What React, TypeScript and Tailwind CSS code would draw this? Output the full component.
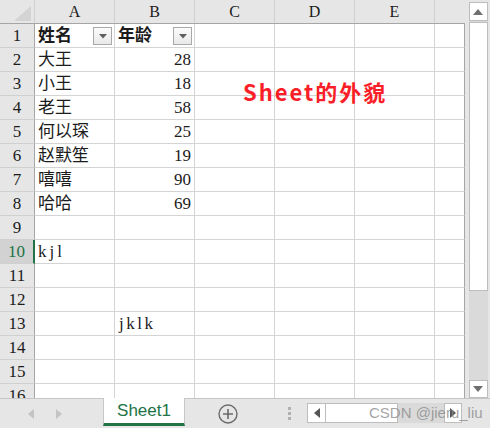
import React from "react";

type Row = { a?: string; b?: string; aBold?: boolean; filter?: boolean };

const rows: Row[] = [
  { a: "姓名", b: "年龄", aBold: true, filter: true },
  { a: "大王", b: "28" },
  { a: "小王", b: "18" },
  { a: "老王", b: "58" },
  { a: "何以琛", b: "25" },
  { a: "赵默笙", b: "19" },
  { a: "嘻嘻", b: "90" },
  { a: "哈哈", b: "69" },
  {},
  { a: "kjl" },
  {},
  {},
  { b: "jklk" },
  {},
  {},
  {},
];

const cols = ["A", "B", "C", "D", "E"];

function FilterButton() {
  return (
    <div className="absolute right-[2px] top-[3px] w-[19px] h-[18px] border border-[#a9a9a9] bg-gradient-to-b from-[#fbfbfb] to-[#e9e9e9] flex items-center justify-center">
      <svg width="8" height="5" viewBox="0 0 8 5">
        <path d="M0 0 L8 0 L4 4.5 Z" fill="#5f5f5f" />
      </svg>
    </div>
  );
}

function Triangle({ dir, color }: { dir: "up" | "down" | "left" | "right"; color: string }) {
  const d = {
    up: "M0 6 L10 6 L5 0 Z",
    down: "M0 0 L10 0 L5 6 Z",
    left: "M6 0 L6 10 L0 5 Z",
    right: "M0 0 L0 10 L6 5 Z",
  }[dir];
  const vertical = dir === "up" || dir === "down";
  return (
    <svg width={vertical ? 10 : 6} height={vertical ? 6 : 10} viewBox={vertical ? "0 0 10 6" : "0 0 6 10"}>
      <path d={d} fill={color} />
    </svg>
  );
}

const serif = "[font-family:'Liberation_Serif','Noto_Sans_CJK_SC',serif]";

// latin text in the cells is wider than Liberation Serif, loosen it a bit
const isLatin = (s?: string) => !!s && /^[a-z]+$/.test(s);

export default function App() {
  return (
    <div className="w-[490px] h-[428px] bg-[#e6e6e6] flex flex-col overflow-hidden select-none">
      <div className="flex h-[398px]">
        {/* sheet grid */}
        <div className={`relative w-[465px] h-[398px] overflow-hidden text-[17px] text-[#1b1b1b] ${serif}`}>
          {/* column header */}
          <div className="flex h-[24px] border-b border-[#a6a6a6]">
            <div className="w-[35px] border-r border-[#d0d0d0] flex items-end justify-end pr-[3px] pb-[2px]">
              <svg width="17" height="15" viewBox="0 0 17 15">
                <path d="M17 0 L17 15 L0 15 Z" fill="#d3d3d3" />
              </svg>
            </div>
            {cols.map((c) => (
              <div key={c} className="w-[80px] border-r border-[#d0d0d0] flex items-center justify-center text-[16px]">
                {c}
              </div>
            ))}
            <div className="w-[30px]" />
          </div>

          {/* body */}
          {rows.map((r, i) => {
            const selected = i === 9;
            return (
              <div key={i} className="flex h-[24px]">
                <div
                  className={`w-[35px] border-b border-[#d0d0d0] flex items-center justify-center ${
                    selected
                      ? "bg-[#d2d2d2] text-[#217346] border-r-2 border-r-[#217346]"
                      : "border-r border-r-[#a6a6a6]"
                  }`}
                >
                  {i + 1}
                </div>
                <div
                  className={`relative w-[80px] bg-white border-r border-b border-[#d4d4d4] flex items-center pl-[3px] ${
                    r.aBold ? "font-bold" : ""
                  } ${isLatin(r.a) ? "tracking-[3px]" : ""}`}
                >
                  {r.a}
                  {r.filter && <FilterButton />}
                </div>
                <div
                  className={`relative w-[80px] bg-white border-r border-b border-[#d4d4d4] flex items-center ${
                    r.filter ? "pl-[3px] font-bold" : r.b && /^\d+$/.test(r.b) ? "justify-end pr-[3px]" : "pl-[4px]"
                  } ${isLatin(r.b) ? "tracking-[2.5px]" : ""}`}
                >
                  {r.b}
                  {r.filter && <FilterButton />}
                </div>
                <div className="w-[80px] bg-white border-r border-b border-[#d4d4d4]" />
                <div className="w-[80px] bg-white border-r border-b border-[#d4d4d4]" />
                <div className="w-[80px] bg-white border-r border-b border-[#d4d4d4]" />
                <div className="w-[30px] bg-white border-b border-[#d4d4d4] border-r border-r-[#a6a6a6]" />
              </div>
            );
          })}

          {/* floating text box */}
          <div className="absolute left-[243px] top-[80px] text-[22px] leading-none font-bold tracking-[2px] text-[#fa1e28] [font-family:'Noto_Sans_CJK_SC',sans-serif]">
            Sheet的外貌
          </div>
        </div>

        {/* vertical scrollbar */}
        <div className="w-[25px] flex flex-col items-center pt-[2px] pl-[1px]">
          <div className="w-[19px] h-[19px] bg-white border border-[#bdbdbd] flex items-center justify-center">
            <Triangle dir="up" color="#6f6f6f" />
          </div>
          <div className="w-[19px] flex-1 bg-[#dadada] flex flex-col">
            <div className="h-[269px] bg-white border border-[#bdbdbd] mt-[1px]" />
          </div>
          <div className="w-[19px] h-[18px] bg-white border border-[#bdbdbd] flex items-center justify-center">
            <Triangle dir="down" color="#6f6f6f" />
          </div>
        </div>
      </div>

      {/* sheet tabs bar */}
      <div className="relative h-[30px] border-t border-[#c6c6c6] flex items-start">
        <div className="w-[103px] h-full flex items-center gap-[22px] pl-[28px]">
          <Triangle dir="left" color="#c4c4c4" />
          <Triangle dir="right" color="#c4c4c4" />
        </div>
        <div className="-mt-px w-[82px] h-[28px] bg-white border-x border-[#c6c6c6] border-b-[3px] border-b-[#217346] flex items-center justify-center text-[17px] text-[#217346] [font-family:'Liberation_Sans',sans-serif]">
          Sheet1
        </div>
        <div className="w-[86px] h-full flex items-center justify-center">
          <svg width="20" height="20" viewBox="0 0 20 20">
            <circle cx="10" cy="10" r="9" fill="none" stroke="#6b6b6b" strokeWidth="1.4" />
            <path d="M10 5 V15 M5 10 H15" stroke="#6b6b6b" strokeWidth="1.6" />
          </svg>
        </div>
        <div className="w-[36px] h-full flex flex-col items-center justify-center gap-[2px]">
          <div className="w-[3px] h-[3px] bg-[#b0b0b0]" />
          <div className="w-[3px] h-[3px] bg-[#b0b0b0]" />
          <div className="w-[3px] h-[3px] bg-[#b0b0b0]" />
        </div>
        <div className="mt-[4px] flex h-[20px] w-[155px]">
          <div className="w-[19px] h-full bg-white border border-[#bdbdbd] flex items-center justify-center">
            <Triangle dir="left" color="#555555" />
          </div>
          <div className="w-[72px] h-full bg-white border border-l-0 border-[#bdbdbd]" />
          <div className="flex-1 bg-[#dadada]" />
          <div className="w-[18px] h-full bg-white border border-[#bdbdbd] flex items-center justify-center">
            <Triangle dir="right" color="#555555" />
          </div>
        </div>
        <div className="absolute left-[369px] top-[3px] text-[15px] text-[#8c8c8c]/80 [font-family:'Liberation_Sans',sans-serif]">
          CSDN @jieru_liu
        </div>
      </div>
    </div>
  );
}
